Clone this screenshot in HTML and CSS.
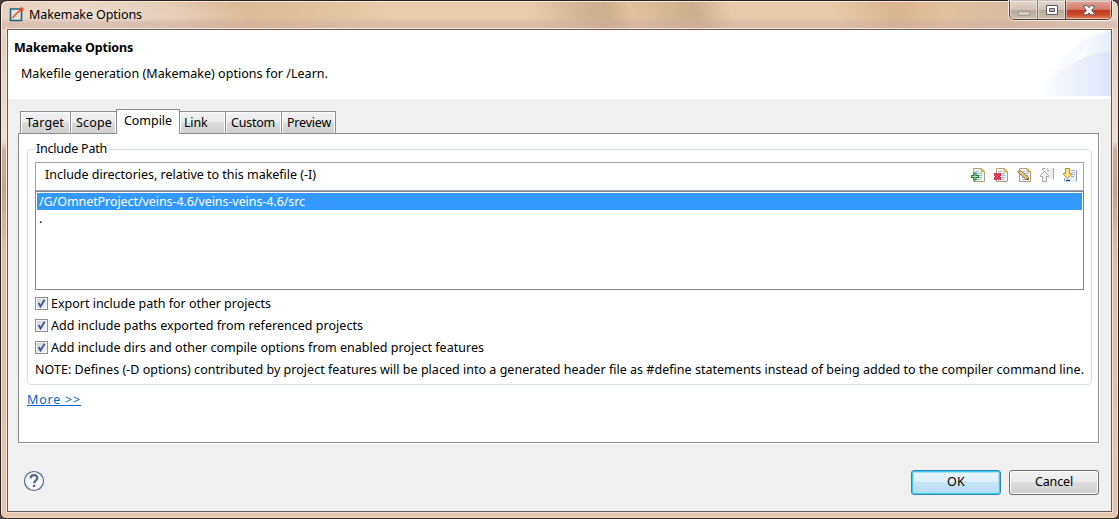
FILE: index.html
```html
<!DOCTYPE html>
<html lang="en">
<head>
<meta charset="utf-8">
<title>Makemake Options</title>
<link rel="stylesheet" href="styles.css">
</head>
<body>
<svg class="defs" width="0" height="0">
  <defs>
    <symbol id="page" viewBox="0 0 16 16">
      <path d="M3.500 1.500H11.500L14.500 4.500V14.500H3.500Z" fill="#f3f7fc" stroke="#b3a070"/>
      <path d="M11 1.500V5H14.500Z" fill="#f3c55c" stroke="#d0a04e" stroke-width=".8"/>
      <path d="M5 4.500H9M6 6.500H12M6 8.500H12.500M6 10.500H12.500M6 12.500H11" stroke="#9db8de" fill="none"/>
    </symbol>
  </defs>
</svg>
<div class="window">
  <header class="titlebar">
    <svg class="app-icon" width="15" height="15" viewBox="0 0 15 15">
      <path d="M1.500 2H12.500V13.500H1.500Z" fill="#e9e2d9" stroke="#16677d" stroke-width="1.600"/>
      <path d="M3.500 11L6.500 7.500L11.500 3" fill="none" stroke="#f4452c" stroke-width="1.400"/>
      <circle cx="12.300" cy="2.400" r="2.200" fill="#fb4324"/>
    </svg>
    <span class="caption">Makemake Options</span>
    <div class="controls">
      <span class="ctl min"><svg width="14" height="8" viewBox="0 0 14 8"><rect x="1.500" y="2.500" width="11" height="4" fill="#d6cdc5" stroke="#a69b93"/></svg></span>
      <span class="ctl max"><svg width="12" height="10" viewBox="0 0 12 10"><path fill-rule="evenodd" d="M.5 .5H11.500V9.500H.5ZM3.500 3.500V6.500H8.500V3.500Z" fill="#fff" stroke="#535768"/></svg></span>
      <span class="ctl close"><svg width="12" height="11" viewBox="0 0 12 11"><path d="M.7 .7H4.300L6 2.700L7.700 .7H11.300V2L8.600 5.200L11.300 8.500V9.800H7.700L6 7.800L4.300 9.800H.7V8.500L3.400 5.200L.7 2Z" fill="#fff" stroke="#515468"/></svg></span>
    </div>
  </header>
  <main class="client">
    <section class="banner">
      <div>
        <h1>Makemake Options</h1>
        <p>Makefile generation (Makemake) options for /Learn.</p>
      </div>
      <svg class="swoosh" width="75" height="66" viewBox="0 0 75 66">
        <defs>
          <linearGradient id="g1"><stop offset="0" stop-color="#fff"/><stop offset="1" stop-color="#e7edfa"/></linearGradient>
          <linearGradient id="g2"><stop offset="0" stop-color="#fff"/><stop offset="1" stop-color="#dce4f7"/></linearGradient>
        </defs>
        <path d="M0 66C18 32 42 6 75 0V66Z" fill="url(#g1)" opacity=".6"/>
        <path d="M38 38C46 18 60 5 75 1V66H38Z" fill="url(#g1)"/>
        <path d="M2 66C17 41 45 24 75 21V66Z" fill="url(#g2)"/>
      </svg>
    </section>
    <section class="content">
      <nav class="tabs">
        <span class="tab t-target">Target</span>
        <span class="tab t-scope">Scope</span>
        <span class="tab active">Compile</span>
        <span class="tab t-link">Link</span>
        <span class="tab t-custom">Custom</span>
        <span class="tab t-preview">Preview</span>
      </nav>
      <div class="panel">
        <fieldset class="group">
          <legend>Include Path</legend>
          <div class="toolbar">
            <span class="dir-title">Include directories, relative to this makefile (-I)</span>
            <div class="tools">
              <svg width="16" height="16" viewBox="0 0 16 16"><use href="#page"/><path d="M3.500 5.500H6.500V8H9V11H6.500V13.500H3.500V11H1V8H3.500Z" fill="#247b36"/><path d="M5 6.500V12.500M2 9.500H8" stroke="#b9dda0" fill="none"/></svg>
              <svg width="16" height="16" viewBox="0 0 16 16"><use href="#page"/><path d="M1 6H3.500L4.500 7L5.500 6H8V8.500L7 9.500L8 10.500V13H5.500L4.500 12L3.500 13H1V10.500L2 9.500L1 8.500Z" fill="#cd2945"/><path d="M2 7L7 12M7 7L2 12" stroke="#ed6674" fill="none"/></svg>
              <svg width="16" height="16" viewBox="0 0 16 16"><use href="#page"/><path d="M1.500 4.500L4.500 3.500L12.500 10.500L12.500 12.500L10 12.500Z" fill="#f2d481" stroke="#7a5a30" stroke-width=".8"/><path d="M2.500 4.500L11 11.500" stroke="#d19a3e" stroke-width=".7" fill="none"/><path d="M11 11L13 13H11Z" fill="#333"/></svg>
              <svg width="16" height="16" viewBox="0 0 16 16"><path d="M3 1H14V12H9V5H3Z" fill="#eeeeef"/><path d="M3.500 3V1.500H6M8 1.500H9M14.500 1V12.500M8 3.500H10" stroke="#a5a5a8" fill="none"/><path d="M5.500 4.500L9.500 8.500V9.500H7.500V14.500H3.500V9.500H1.500V8.500Z" fill="#f4f4f4" stroke="#a0a0a0"/></svg>
              <svg width="16" height="16" viewBox="0 0 16 16"><path d="M6 3H14V15H3V11H6Z" fill="#eaf0fa"/><path d="M14.500 3V14.500M2.500 11V14.500" stroke="#91a3c1" fill="none"/><path d="M9 3.500H13M10 5.500H13M10 7.500H13M9 9.500H12" stroke="#9eb2d7" fill="none"/><path d="M4 13.500H8" stroke="#174d9c" stroke-width="1.500" fill="none"/><path d="M3.500 1.500H7.500V6.500H9.500V7.500L5.500 11.500L1.500 7.500V6.500H3.500Z" fill="#fae181" stroke="#c38a2d"/></svg>
            </div>
          </div>
          <div class="list">
            <div class="row selected">/G/OmnetProject/veins-4.6/veins-veins-4.6/src</div>
            <div class="row dot">.</div>
          </div>
          <div class="check"><svg class="box" width="13" height="13" viewBox="1 1 11 11"><path d="M3.600 6L5.500 9.400L9.600 2.800" fill="none" stroke="#3e5799" stroke-width="1.900"/></svg><span class="c1">Export include path for other projects</span></div>
          <div class="check"><svg class="box" width="13" height="13" viewBox="1 1 11 11"><path d="M3.600 6L5.500 9.400L9.600 2.800" fill="none" stroke="#3e5799" stroke-width="1.900"/></svg><span class="c2">Add include paths exported from referenced projects</span></div>
          <div class="check"><svg class="box" width="13" height="13" viewBox="1 1 11 11"><path d="M3.600 6L5.500 9.400L9.600 2.800" fill="none" stroke="#3e5799" stroke-width="1.900"/></svg><span class="c2">Add include dirs and other compile options from enabled project features</span></div>
          <div class="note">NOTE: Defines (-D options) contributed by project features will be placed into a generated header file as #define statements instead of being added to the compiler command line.</div>
        </fieldset>
        <a class="more">More &gt;&gt;</a>
      </div>
    </section>
    <footer class="actions">
      <svg class="help" width="22" height="22" viewBox="0 0 22 22">
        <circle cx="11" cy="11" r="9.500" fill="#f7f8fa" stroke="#536790" stroke-width="1.200"/>
        <path d="M7.600 8.300C7.600 4 14.500 4.200 14.300 8C14.200 10.400 11.200 10.300 11.200 13.300" fill="none" stroke="#536790" stroke-width="2.300"/>
        <rect x="10" y="14.800" width="2.400" height="2.200" fill="#536790"/>
      </svg>
      <button class="btn ok">OK</button>
      <button class="btn cancel">Cancel</button>
    </footer>
  </main>
</div>
</body>
</html>
```
FILE: styles.css
```css
* { box-sizing: border-box; }
body {
  margin: 0;
  width: 1119px;
  height: 519px;
  overflow: hidden;
  background: #4a4240;
  font: 12.5px/16px "Noto Sans", "Open Sans", sans-serif;
  color: #000;
}
svg { display: block; flex: none; }
.defs { position: absolute; }
.window {
  width: 1119px;
  height: 519px;
  border: 1px solid #2b2422;
  border-radius: 7px 7px 6px 6px;
  padding: 0 6px 6px;
  background:
    linear-gradient(180deg, transparent 17px, rgba(205,172,165,.5) 22px, rgba(205,172,165,.4) 28px, transparent 28px),
    radial-gradient(ellipse 170px 30px at 80px 14px, rgba(240,228,219,.9), rgba(238,222,210,.6) 60%, transparent),
    linear-gradient(180deg, transparent 29px, #e8cdb9 29px, #efdfd3 140px, #cfae95 149px, #c6a48a 190px, #dfbea4 250px, #e5c5ab),
    linear-gradient(75deg, #e0c6b0 0, #d3b18c 22%, #dfbf99 34%, #e8cbaa 42%, #e8cbaa 53%, #ceb08e 58%, #cdae8c 59%, #e2c29d 61%, #ccae8c 66%, #e8caa8 69%, #e8caa8 77%, #d8b58e 82%, #e1c19c 86%, #d8bba1 91%, #e9d7c9);
  box-shadow: inset 1px 1px #f7e8dc, inset -1px -1px #f1ddcd;
}
.titlebar {
  display: flex;
  align-items: flex-start;
  height: 27px;
  padding-left: 2px;
}
.app-icon { margin-top: 6px; }
.caption { margin: 6px 0 0 5px; letter-spacing: -.076px; }
.controls {
  display: flex;
  width: 103px;
  height: 19px;
  margin: 0 0 0 auto;
  border: 1px solid #4e4340;
  border-top: 0;
  border-radius: 0 0 5px 5px;
  overflow: hidden;
  box-shadow: 0 0 0 1px rgba(255,247,240,.75);
}
.ctl {
  display: flex;
  align-items: center;
  justify-content: center;
  box-shadow: inset 0 0 0 1px rgba(255,255,255,.45);
  background: linear-gradient(#e3d6cb 0, #d3c3b7 47%, #baa99c 50%, #cdbdad);
}
.min { width: 27px; padding-top: 5px; }
.max { width: 28px; border-left: 1px solid #85776f; }
.close {
  flex: 1;
  border-left: 1px solid #713027;
  background: linear-gradient(#e3a496 0, #d37b69 47%, #bd3a20 50%, #cd4a28 75%, #e08360);
}
.client {
  display: flex;
  flex-direction: column;
  width: 1105px;
  height: 483px;
  border: 1px solid #655b53;
  box-shadow: 0 0 0 1px #f4e6da;
  background: #f0f0f0;
  margin-top: 1px;
}
.banner {
  display: flex;
  justify-content: space-between;
  height: 69px;
  background: #fff;
}
h1 { margin: 10px 0 0 6px; font: bold 12.5px/16px "Noto Sans", sans-serif; letter-spacing: -.174px; }
.banner p { margin: 10px 0 0 13px; letter-spacing: .032px; }
.content { padding: 10px 12px 0 10px; }
.tabs {
  display: flex;
  align-items: flex-end;
  height: 25px;
  padding-left: 2px;
  position: relative;
  z-index: 1;
}
.tab {
  height: 23px;
  padding: 3px 0 0 5px;
  border: 1px solid #898c95;
  border-right: 0;
  box-shadow: inset 1px 1px #fcfcfc, inset -1px 0 #fcfcfc;
  background: linear-gradient(#f2f2f2 0, #ebebeb 48%, #dcdcdc 52%, #cfcfcf);
}
.t-target { width: 50px; letter-spacing: .125px; }
.t-scope { width: 46px; letter-spacing: .167px; }
.tab.active {
  width: 64px;
  height: 25px;
  padding: 3px 0 0 7px;
  border: 1px solid #898c95;
  border-bottom: 0;
  background: #fff;
  letter-spacing: -.048px;
}
.t-link { width: 45px; padding-left: 4px; border-left: 0; letter-spacing: -.2px; }
.t-custom { width: 56px; letter-spacing: -.229px; }
.t-preview { width: 55px; border-right: 1px solid #898c95; letter-spacing: -.211px; }
.panel {
  width: 1081px;
  height: 310px;
  margin-top: -1px;
  border: 1px solid #898c95;
  padding: 7px 6px 0 8px;
  background: #fff;
  box-shadow: 1px 1px #fff;
}
.group {
  height: 244px;
  margin: 0;
  padding: 0 7px;
  border: 1px solid #d5dfe5;
  border-radius: 4px;
  min-width: 0;
}
legend { height: 16px; padding: 0 1px; line-height: 16px; letter-spacing: -.226px; }
.toolbar {
  display: flex;
  justify-content: space-between;
  width: 1049px;
  height: 29px;
  margin-top: 5px;
  border: 1px solid #a0a3ab;
  padding: 4px 5px 0 9px;
}
.dir-title { letter-spacing: -.014px; }
.tools { display: flex; gap: 7px; }
.list {
  width: 1049px;
  height: 99px;
  border: 1px solid #828790;
  padding: 1px;
  margin-bottom: 6px;
}
.row { height: 18px; padding-left: 2px; line-height: 17px; letter-spacing: -.071px; }
.selected { height: 17px; background: #3399ff; color: #fff; }
.check { display: flex; align-items: flex-start; gap: 3px; height: 16px; margin-bottom: 6px; }
.box {
  margin-top: 1px;
  border: 1px solid #8e8f8f;
  background: linear-gradient(135deg, #c9d0d9, #f5f6f7);
  box-shadow: inset 0 0 0 1px #f4f4f4;
}
.c1 { letter-spacing: -.008px; }
.c2 { letter-spacing: .027px; }
.note { white-space: nowrap; letter-spacing: .022px; }
.more {
  display: inline-block;
  margin-top: 7px;
  color: #0066cc;
  text-decoration: underline;
  letter-spacing: .798px;
}
.actions {
  display: flex;
  align-items: center;
  margin-top: 26px;
  padding: 0 12px 0 15px;
  height: 26px;
}
.help { margin-top: -2px; }
.btn {
  width: 90px;
  height: 25px;
  padding: 0;
  border: 1px solid #707070;
  border-radius: 3px;
  font: 12.5px/16px "Noto Sans", sans-serif;
  color: #000;
  background: linear-gradient(#f2f2f2 0, #ebebeb 48%, #dddddd 50%, #cfcfcf);
  box-shadow: inset 0 0 0 1px #fbfbfb;
  letter-spacing: -.152px;
}
.ok {
  margin: 0 8px 0 auto;
  border-color: #3c7fb1;
  background: linear-gradient(#e9f6fd 0, #def0fa 48%, #c5e4f6 50%, #b8dcf2);
  box-shadow: inset 0 0 0 1px #38cbf5, inset 0 0 0 2px #a6e4f8;
  letter-spacing: .25px;
}
```
